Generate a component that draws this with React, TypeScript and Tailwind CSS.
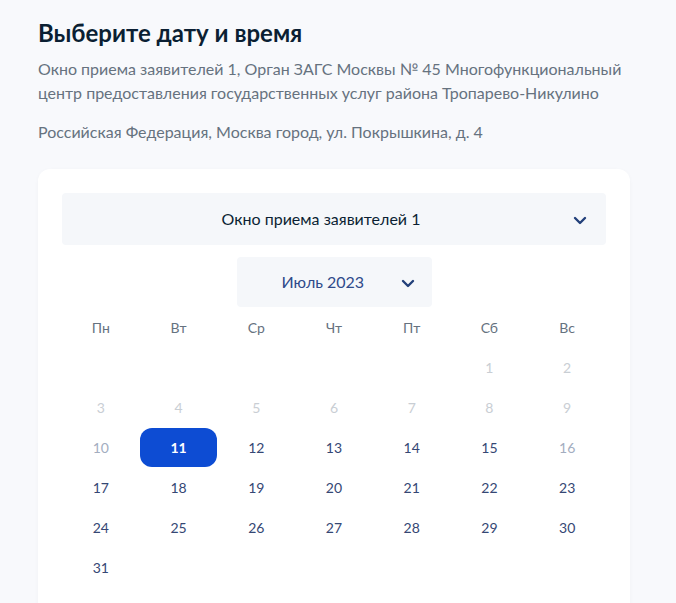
import React from "react";

const Chevron = () => (
  <svg width="14" height="9" viewBox="0 0 14 9" fill="none">
    <path d="M2 2l5 5 5-5" stroke="#23407a" strokeWidth="2.4" strokeLinecap="round" strokeLinejoin="round" />
  </svg>
);

type Day = { n: number | null; kind: "empty" | "past" | "off" | "on" | "sel" };

const days: Day[] = [
  ...[0, 0, 0, 0, 0].map(() => ({ n: null, kind: "empty" as const })),
  { n: 1, kind: "past" },
  { n: 2, kind: "past" },
  ...[3, 4, 5, 6, 7, 8, 9].map((n) => ({ n, kind: "past" as const })),
  { n: 10, kind: "off" },
  { n: 11, kind: "sel" },
  { n: 12, kind: "on" },
  { n: 13, kind: "on" },
  { n: 14, kind: "on" },
  { n: 15, kind: "on" },
  { n: 16, kind: "off" },
  ...[17, 18, 19, 20, 21, 22, 23, 24, 25, 26, 27, 28, 29, 30, 31].map((n) => ({ n, kind: "on" as const })),
];

const cls: Record<string, string> = {
  empty: "",
  past: "text-[#c9ced4]",
  off: "text-[#a3adbf]",
  on: "text-[#354774]",
  sel: "bg-[#0d4cd3] text-white font-bold rounded-xl",
};

export default function App() {
  return (
    <div className="min-h-[603px] bg-[#f8f9fc] px-[38px] pt-[17px] overflow-hidden" style={{ fontFamily: "Lato, 'Noto Sans', sans-serif" }}>
      <h1 className="text-[24px] leading-[32px] font-bold text-[#0b1f33]">Выберите дату и время</h1>
      <p className="mt-[8px] text-[16px] leading-[24px] text-[#66727f]">
        Окно приема заявителей 1, Орган ЗАГС Москвы № 45 Многофункциональный
        <br />
        центр предоставления государственных услуг района Тропарево-Никулино
      </p>
      <p className="mt-[15px] text-[16px] leading-[24px] text-[#66727f]">Российская Федерация, Москва город, ул. Покрышкина, д. 4</p>
      <div className="mt-[25px] w-[592px] bg-white rounded-t-xl p-[24px] pb-[40px] shadow-[0_1px_4px_rgba(0,0,0,0.03)]">
        <div className="relative h-[52px] bg-[#f5f7fa] rounded flex items-center justify-center pr-[26px] text-[16px] text-[#0b1f33]">
          Окно приема заявителей 1
          <span className="absolute right-[19px] top-[23px]"><Chevron /></span>
        </div>
        <div className="flex justify-center mt-[12px]">
          <div className="w-[195px] h-[50px] bg-[#f5f7fa] rounded flex items-center pl-[45px] text-[16px] text-[#2f4a8a]">
            <span>Июль 2023</span>
            <span className="ml-[37px] mt-[3px]"><Chevron /></span>
          </div>
        </div>
        <div className="grid grid-cols-7 text-center">
          {["Пн", "Вт", "Ср", "Чт", "Пт", "Сб", "Вс"].map((d) => (
            <div key={d} className="h-[40px] flex items-center justify-center text-[14px] text-[#66727f]">{d}</div>
          ))}
          {days.map((d, i) => (
            <div key={i} className="h-[40px] flex items-center justify-center">
              {d.n !== null && (
                <div className={`w-[78px] h-[39px] flex items-center justify-center text-[14px] ${cls[d.kind]}`}>{d.n}</div>
              )}
            </div>
          ))}
        </div>
      </div>
    </div>
  );
}
